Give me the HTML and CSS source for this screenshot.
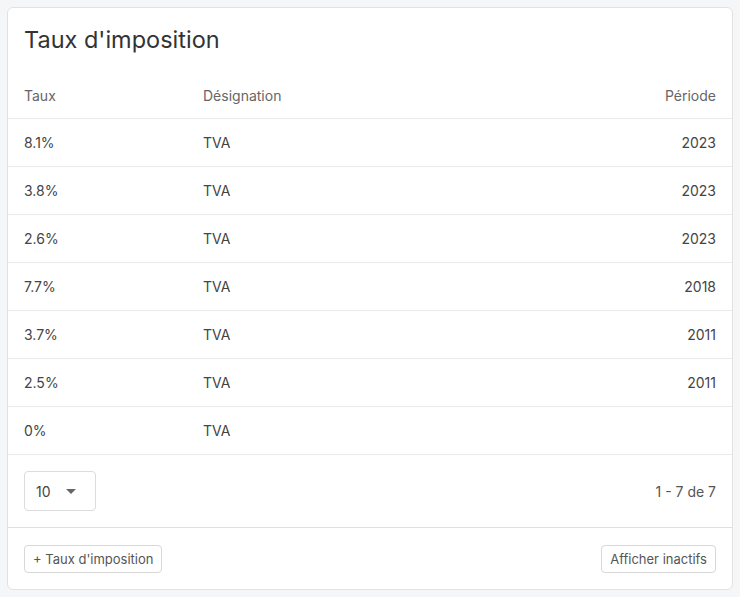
FILE: index.html
```html
<!DOCTYPE html>
<html lang="fr">
<head>
<meta charset="utf-8">
<link rel="stylesheet" href="styles.css">
</head>
<body>
<div class="card">
  <h1 class="title">Taux d'imposition</h1>
  <div class="table">
    <div class="row head"><div class="c1">Taux</div><div class="c2">Désignation</div><div class="c3">Période</div></div>
    <div class="row"><div class="c1">8.1%</div><div class="c2">TVA</div><div class="c3">2023</div></div>
    <div class="row"><div class="c1">3.8%</div><div class="c2">TVA</div><div class="c3">2023</div></div>
    <div class="row"><div class="c1">2.6%</div><div class="c2">TVA</div><div class="c3">2023</div></div>
    <div class="row"><div class="c1">7.7%</div><div class="c2">TVA</div><div class="c3">2018</div></div>
    <div class="row"><div class="c1">3.7%</div><div class="c2">TVA</div><div class="c3">2011</div></div>
    <div class="row"><div class="c1">2.5%</div><div class="c2">TVA</div><div class="c3">2011</div></div>
    <div class="row"><div class="c1">0%</div><div class="c2">TVA</div><div class="c3"></div></div>
  </div>
  <div class="pager">
    <div class="select"><span>10</span><svg class="caret" width="10" height="5" viewBox="0 0 10 5"><path d="M0 0h10L5 5z" fill="#666"/></svg></div>
    <div class="count">1 - 7 de 7</div>
  </div>
  <div class="actions">
    <button class="btn">+ Taux d'imposition</button>
    <button class="btn">Afficher inactifs</button>
  </div>
</div>
</body>
</html>
```
FILE: styles.css
```css
html, body { margin: 0; padding: 0; }
body {
  background: #f5f6f8;
  padding: 7px;
  font-family: Inter, "Noto Sans", sans-serif;
  color: #444;
}
.card {
  background: #fff;
  border: 1px solid #e2e2e2;
  border-radius: 6px;
  height: 583px;
  box-sizing: border-box;
  display: flex;
  flex-direction: column;
}
.title {
  margin: 0;
  height: 64px;
  padding: 0 16px 1px;
  display: flex;
  align-items: center;
  font-size: 23.5px;
  font-weight: 400;
  color: #333;
  box-sizing: border-box;
}
.row {
  display: grid;
  grid-template-columns: 179px 1fr 200px;
  height: 48px;
  box-sizing: border-box;
  align-items: center;
  border-bottom: 1px solid #ebebeb;
  font-size: 14px;
  color: #444;
}
.row > div { padding: 0 16px; }
.row.head { color: #666; height: 47px; }
.c3 { text-align: right; }
.pager {
  display: flex;
  justify-content: space-between;
  align-items: center;
  height: 73px;
  box-sizing: border-box;
  padding: 0 16px;
  border-bottom: 1px solid #e0e0e0;
}
.select {
  width: 72px;
  height: 40px;
  box-sizing: border-box;
  border: 1px solid #dcdcdc;
  border-radius: 4px;
  display: flex;
  align-items: center;
  padding-left: 11px;
  font-size: 14px;
  color: #444;
}
.caret { margin-left: 15px; }
.count { font-size: 14px; color: #555; }
.actions {
  flex: 1;
  display: flex;
  justify-content: space-between;
  align-items: center;
  padding: 0 16px;
}
.btn {
  font-family: Inter, "Noto Sans", sans-serif;
  font-size: 13px;
  color: #555;
  background: #fff;
  border: 1px solid #d8d8d8;
  border-radius: 4px;
  height: 28px;
  padding: 0 8px;
}
```
